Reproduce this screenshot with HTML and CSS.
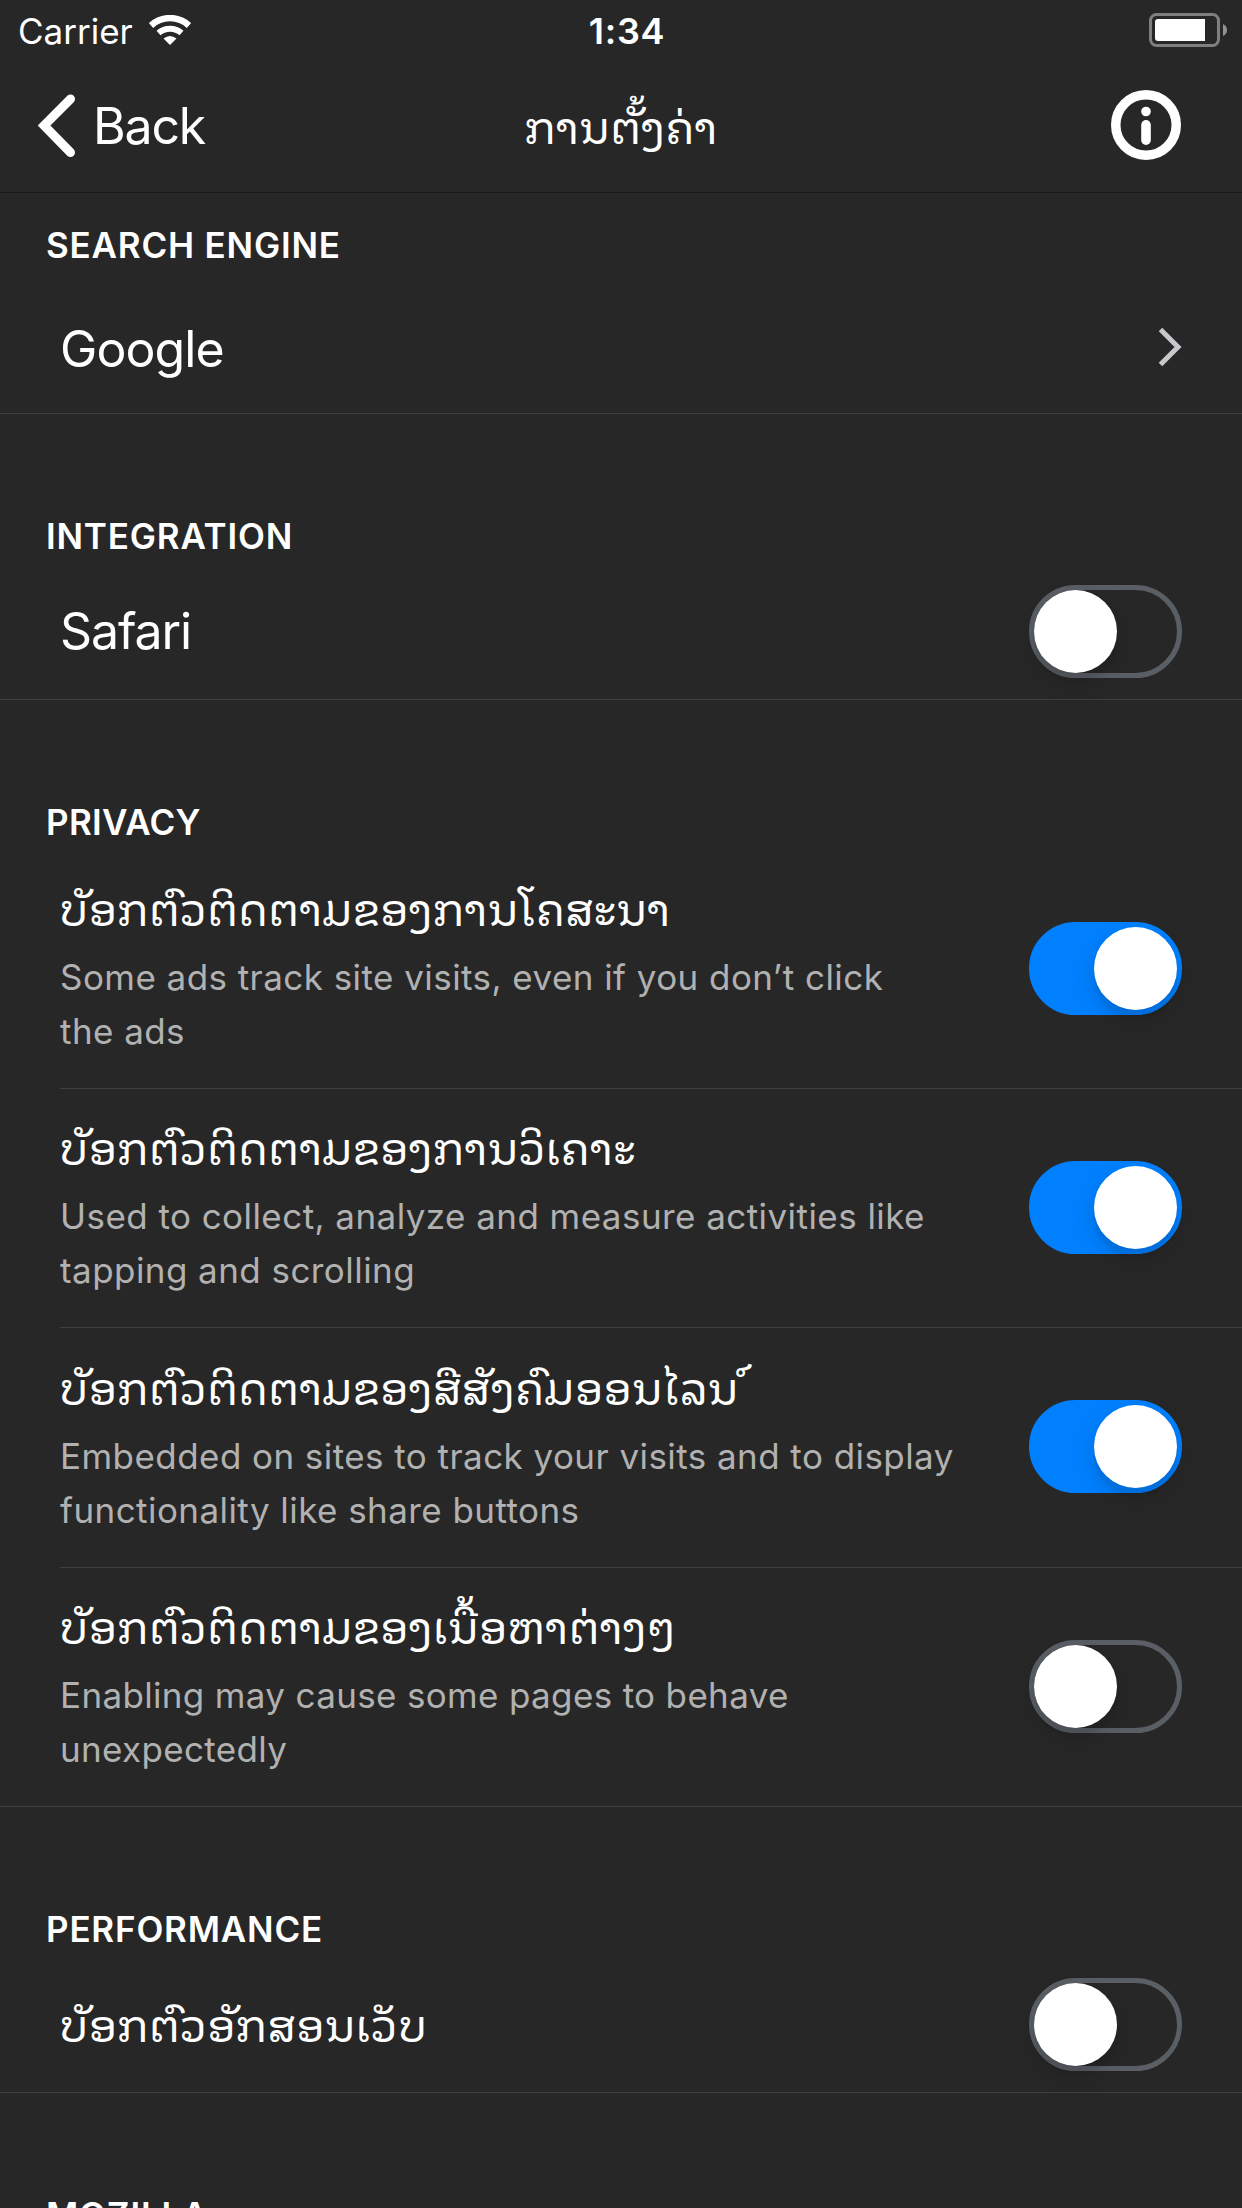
FILE: index.html
```html
<!DOCTYPE html>
<html lang="lo">
<head>
<meta charset="utf-8">
<title>ການຕັ້ງຄ່າ</title>
<link rel="stylesheet" href="styles.css">
</head>
<body>
<header class="status">
  <div class="carrier"><span>Carrier</span>
    <svg class="wifi" viewBox="0 0 42 30" width="42" height="30" fill="none" stroke="#fff"><path d="M2 10.500A28 28 0 0 1 40 10.500" stroke-width="6.500"/><path d="M9.500 18A17.500 17.500 0 0 1 32.500 18" stroke-width="6"/><path d="M14.500 23.500Q21 18.500 27.500 23.500L21 30Z" fill="#fff" stroke="none"/></svg>
  </div>
  <time class="clock">1:34</time>
  <svg class="battery" viewBox="0 0 79 34" width="79" height="34"><rect x="1.500" y="1.500" width="68" height="31" rx="6" fill="none" stroke="#7f7f7f" stroke-width="3"/><path d="M9 6H56V28H9Q6 28 6 25V9Q6 6 9 6Z" fill="#fff"/><path d="M74 11Q78 13 78 17T74 23Z" fill="#929292"/></svg>
</header>
<nav class="nav">
  <a class="back"><svg viewBox="0 0 38 64" width="38" height="64"><path d="M32.500 5 6 31.500 32.500 58.500" fill="none" stroke="#fff" stroke-width="9" stroke-linecap="round"/></svg><span>Back</span></a>
  <h1 class="title">ການຕັ້ງຄ່າ</h1>
  <svg class="info" viewBox="0 0 70 70" width="70" height="70"><circle cx="35" cy="35" r="30.250" fill="none" stroke="#fff" stroke-width="9.500"/><circle cx="35" cy="21.500" r="4.800" fill="#fff"/><rect x="30.200" y="30" width="9.600" height="25" rx="4.800" fill="#fff"/></svg>
</nav>
<main>
  <section>
    <h2 class="heading first">SEARCH ENGINE</h2>
    <div class="row short"><span class="label google">Google</span><svg viewBox="0 0 24 40" width="24" height="40"><path d="M2.500 2.500 20 20 2.500 37.500" fill="none" stroke="#c7c7cc" stroke-width="5"/></svg></div>
  </section>
  <section>
    <h2 class="heading">INTEGRATION</h2>
    <div class="row"><span class="label safari">Safari</span><i class="toggle"></i></div>
  </section>
  <section>
    <h2 class="heading privacy">PRIVACY</h2>
    <div class="row tall"><div class="copy"><p class="lao">ບັອກຕົວຕິດຕາມຂອງການໂຄສະນາ</p><p class="desc">Some ads track site visits, even if you don’t click<br>the ads</p></div><i class="toggle on"></i></div>
    <div class="row tall"><div class="copy"><p class="lao">ບັອກຕົວຕິດຕາມຂອງການວິເຄາະ</p><p class="desc">Used to collect, analyze and measure activities like<br>tapping and scrolling</p></div><i class="toggle on"></i></div>
    <div class="row tall plus"><div class="copy"><p class="lao">ບັອກຕົວຕິດຕາມຂອງສືສັງຄົມອອນໄລນ<span class="mark">&nbsp;໌</span></p><p class="desc">Embedded on sites to track your visits and to display<br>functionality like share buttons</p></div><i class="toggle on"></i></div>
    <div class="row tall"><div class="copy"><p class="lao">ບັອກຕົວຕິດຕາມຂອງເນື້ອຫາຕ່າງໆ</p><p class="desc tight">Enabling may cause some pages to behave<br>unexpectedly</p></div><i class="toggle"></i></div>
  </section>
  <section>
    <h2 class="heading">PERFORMANCE</h2>
    <div class="row"><span class="lao single">ບັອກຕົວອັກສອນເວັບ</span><i class="toggle"></i></div>
  </section>
  <section>
    <h2 class="heading">MOZILLA</h2>
  </section>
</main>
</body>
</html>
```
FILE: styles.css
```css
* { box-sizing: border-box; }
body {
  margin: 0;
  height: 2208px;
  overflow: hidden;
  background: #272727;
  color: #fff;
  font-family: Inter, "Noto Sans Lao Looped", "Noto Sans Lao", "DejaVu Sans", sans-serif;
}
h1, h2, p { margin: 0; font-weight: 400; }
svg { display: block; flex: none; }
.status {
  height: 60px;
  display: grid;
  grid-template-columns: 1fr auto 1fr;
  align-items: center;
  padding: 2px 14px 0 18px;
}
.carrier { display: flex; align-items: center; gap: 16px; font-size: 35px; }
.wifi { margin-bottom: 2px; }
.clock { font-size: 36px; font-weight: 600; letter-spacing: .7px; margin-left: 8px; }
.battery { justify-self: end; margin-bottom: 2px; }
.nav {
  height: 133px;
  display: grid;
  grid-template-columns: 1fr auto 1fr;
  align-items: center;
  padding: 0 61px;
  border-bottom: 1px solid #1a1a1a;
}
.back { display: flex; align-items: center; gap: 17px; margin-left: -23px; font-size: 50px; letter-spacing: -1.2px; }
.title {
  padding-bottom: 4px;
  font-family: "Noto Sans Lao Looped", "Noto Sans Lao", "DejaVu Sans", sans-serif;
  font-size: 44px;
  line-height: 60px;
}
.info { justify-self: end; margin-bottom: 2px; }
.heading {
  height: 150px;
  padding: 0 46px 8px;
  display: flex;
  align-items: flex-end;
  font-size: 35px;
  font-weight: 600;
  line-height: 40px;
  letter-spacing: .8px;
}
.first { height: 87px; padding-bottom: 15px; }
.privacy { letter-spacing: .3px; }
.row {
  height: 136px;
  padding: 0 60px;
  display: flex;
  align-items: center;
  justify-content: space-between;
  border-bottom: 1px solid #404040;
}
.short { height: 134px; }
.label { font-size: 50px; letter-spacing: -.9px; }
.google { padding-top: 5px; }
.safari { letter-spacing: -1.1px; padding-bottom: 1px; }
.tall { height: 239px; padding-bottom: 2px; }
.plus { height: 240px; }
.tall:not(:last-child) { margin-left: 60px; padding-left: 0; }
.copy { padding-bottom: 2px; }
.lao {
  margin-left: -1px;
  font-family: "Noto Sans Lao Looped", "Noto Sans Lao", "DejaVu Sans", sans-serif;
  font-size: 44px;
  line-height: 60px;
  letter-spacing: -.05px;
  white-space: nowrap;
}
.single { padding-bottom: 6px; }
/* The cancellation mark stands on its own, tucked in after the last letter. */
.mark { margin-left: -16px; }
.desc { margin-top: 14px; font-size: 35px; line-height: 54px; letter-spacing: .44px; color: #b1b1b1; white-space: nowrap; }
.tight { letter-spacing: .34px; }
.toggle {
  flex: none;
  width: 153px;
  height: 93px;
  border-radius: 47px;
  border: 5px solid #5a5f66;
  display: flex;
}
.toggle::before {
  content: "";
  width: 83px;
  height: 83px;
  border-radius: 50%;
  background: #fff;
  box-shadow: 0 9px 24px rgba(0, 0, 0, .15), 0 9px 3px rgba(0, 0, 0, .05);
}
.toggle.on { background: #0080ff; border-color: #0080ff; justify-content: flex-end; }
```
